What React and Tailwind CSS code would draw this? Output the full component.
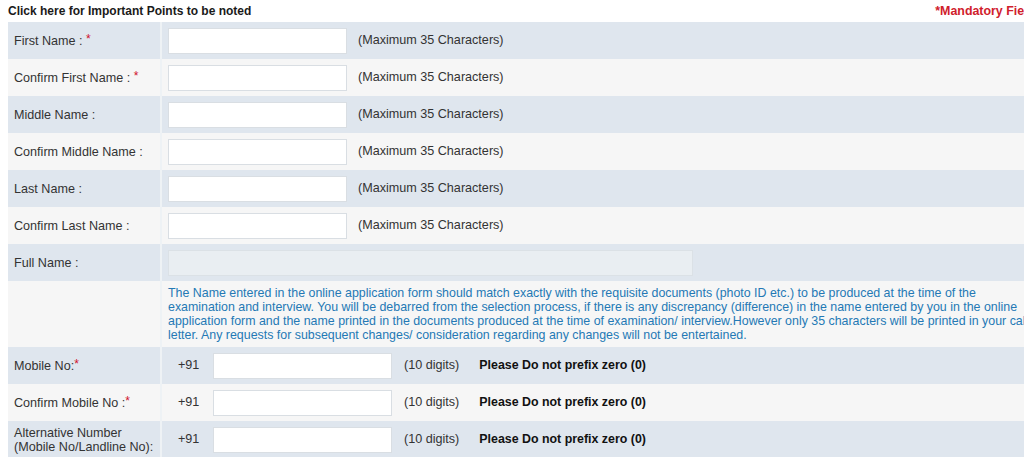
import React from 'react';

const font = { fontFamily: '"Liberation Sans", Arial, sans-serif' };

const Star = () => <span className="text-[#d0112b] relative -top-[2px] text-[12px]">*</span>;

const Row = ({ bg, label, children, h = 'h-[37px]' }) => (
    <div className={`flex ${h} ${bg}`}>
        <div className="w-[154px] shrink-0 flex items-center pl-[6px] text-[12.6px] leading-[14px] text-[#333] border-r-2 border-[#eef2f5]">
            {label}
        </div>
        <div className="flex-1 flex items-center pl-[6px] text-[12.6px] text-[#333]">{children}</div>
    </div>
);

const TextInput = ({ w = 'w-[179px]' }) => (
    <input type="text" className={`${w} h-[26px] bg-white border border-[#d9dee3] outline-none`} />
);

const NameField = () => (
    <>
        <TextInput />
        <span className="ml-[11px]">(Maximum 35 Characters)</span>
    </>
);

const MobileField = () => (
    <>
        <span className="ml-[10px] w-[35px]">+91</span>
        <TextInput />
        <span className="ml-[12px]">(10 digits)</span>
        <span className="ml-[20px] text-[12.4px] font-bold text-[#111]">Please Do not prefix zero (0)</span>
    </>
);

export default function App() {
    const blue = 'bg-[#dfe6ee]';
    const grey = 'bg-[#f6f6f6]';

    return (
        <div className="w-[1024px] h-[457px] overflow-hidden bg-white" style={font}>
            <div className="w-[1034px] ml-[8px]">
                <div className="h-[22px] flex justify-between items-start pt-[2px]">
                    <span className="text-[12px] font-bold text-[#1a1a1a] cursor-pointer">Click here for Important Points to be noted</span>
                    <span className="text-[12.4px] font-bold text-[#d0202c]">*Mandatory Fields</span>
                </div>

                <Row bg={blue} label={<span>First Name : <Star /></span>}><NameField /></Row>
                <Row bg={grey} label={<span>Confirm First Name : <Star /></span>}><NameField /></Row>
                <Row bg={blue} label="Middle Name :"><NameField /></Row>
                <Row bg={grey} label="Confirm Middle Name :"><NameField /></Row>
                <Row bg={blue} label="Last Name :"><NameField /></Row>
                <Row bg={grey} label="Confirm Last Name :"><NameField /></Row>
                <Row bg={blue} label="Full Name :">
                    <input type="text" disabled className="w-[525px] h-[26px] bg-[#e9eef2] border border-[#dbe1e6]" />
                </Row>

                <div className={`flex h-[66px] ${grey}`}>
                    <div className="w-[154px] shrink-0 border-r-2 border-[#eef2f5]" />
                    <div className="flex-1 pl-[6px] pt-[5px] text-[12.4px] leading-[14px] text-[#2479b5]">
                        <span className="block whitespace-nowrap">The Name entered in the online application form should match exactly with the requisite documents (photo ID etc.) to be produced at the time of the</span>
                        <span className="block whitespace-nowrap">examination and interview. You will be debarred from the selection process, if there is any discrepancy (difference) in the name entered by you in the online</span>
                        <span className="block whitespace-nowrap">application form and the name printed in the documents produced at the time of examination/ interview.However only 35 characters will be printed in your call</span>
                        <span className="block whitespace-nowrap">letter. Any requests for subsequent changes/ consideration regarding any changes will not be entertained.</span>
                    </div>
                </div>

                <Row bg={blue} label={<span>Mobile No:<Star /></span>}><MobileField /></Row>
                <Row bg={grey} label={<span>Confirm Mobile No :<Star /></span>}><MobileField /></Row>
                <Row bg={blue} label={<span>Alternative Number<br />(Mobile No/Landline No):</span>}><MobileField /></Row>
            </div>
        </div>
    );
}
